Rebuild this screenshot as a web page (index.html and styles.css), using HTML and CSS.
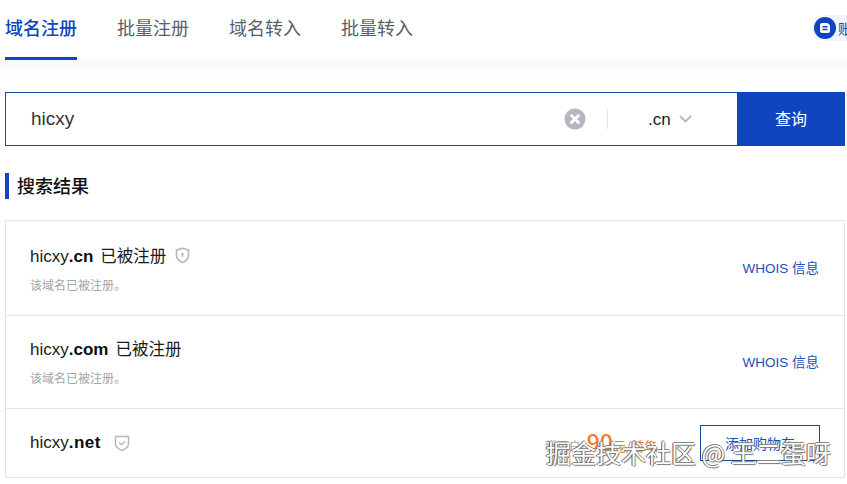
FILE: index.html
```html
<!DOCTYPE html>
<html lang="zh-CN">
<head>
<meta charset="utf-8">
<title>域名注册</title>
<link rel="stylesheet" href="styles.css">
</head>
<body>
<div class="page">
  <header class="topbar">
    <nav class="tabs">
      <a class="tab active">域名注册</a>
      <a class="tab">批量注册</a>
      <a class="tab">域名转入</a>
      <a class="tab">批量转入</a>
    </nav>
    <div class="promo">
      <svg class="promo-icon" width="22" height="22" viewBox="0 0 22 22"><circle cx="11" cy="11" r="11" fill="#0f46c0"/><path d="M6 8a2 2 0 0 1 2-2h5.500L16 8.200V14a2 2 0 0 1-2 2H8a2 2 0 0 1-2-2z" fill="#fff"/><path d="M8.500 9.800h5M8.500 12.500h5" stroke="#0f46c0" stroke-width="1.400"/></svg>
      <span class="promo-text">账户</span>
    </div>
  </header>
  <div class="fade"></div>

  <main class="content">
    <form class="search">
      <div class="search-input">hicxy</div>
      <svg class="clear" width="22" height="22" viewBox="0 0 22 22"><circle cx="11" cy="11" r="10.500" fill="#b4b7bf"/><path d="M7.500 7.500l7 7M14.500 7.500l-7 7" stroke="#fff" stroke-width="3" stroke-linecap="round"/></svg>
      <span class="sep"></span>
      <div class="suffix">
        <span class="suffix-text">.cn</span>
        <svg width="13" height="8" viewBox="0 0 13 8"><path d="M1 1l5.500 5.500L12 1" fill="none" stroke="#b4b7bf" stroke-width="1.800"/></svg>
      </div>
      <button class="go" type="button">查询</button>
    </form>

    <h2 class="section-title">搜索结果</h2>

    <section class="results">
      <div class="row row-a">
        <div class="info">
          <div class="domain">hicxy<b>.cn</b><span class="state">已被注册</span>
            <svg class="shield" width="15" height="17" viewBox="0 0 15 17"><path d="M7.500 1.200l6 2v5c0 3.500-2.600 5.900-6 7.300-3.400-1.400-6-3.800-6-7.300v-5z" fill="none" stroke="#b5b8bd" stroke-width="1.700"/><circle cx="7.500" cy="7" r="1.300" fill="#b5b8bd"/><path d="M7.500 7.500v2.500" stroke="#b5b8bd" stroke-width="1.200"/></svg>
          </div>
          <p class="note">该域名已被注册。</p>
        </div>
        <a class="whois">WHOIS 信息</a>
      </div>
      <div class="row row-b">
        <div class="info">
          <div class="domain">hicxy<b>.com</b><span class="state">已被注册</span></div>
          <p class="note">该域名已被注册。</p>
        </div>
        <a class="whois">WHOIS 信息</a>
      </div>
      <div class="row row-c">
        <div class="info">
          <div class="domain">hicxy<b class="tld-net">.net</b>
            <svg class="shield shield-ok" width="16" height="17" viewBox="0 0 16 17"><path d="M1.500 1.500h13v7.500c0 2.800-3 5-6.500 6.500-3.500-1.500-6.500-3.700-6.500-6.500z" fill="none" stroke="#b5b8bd" stroke-width="1.500"/><path d="M5 7.500l2.500 2.200L11 6.500" fill="none" stroke="#b5b8bd" stroke-width="1.500"/></svg>
          </div>
        </div>
        <div class="buy">
          <div class="price"><span class="price-old">新用户</span><strong>90</strong><span class="price-unit">元/首年</span></div>
          <a class="cart">添加购物车</a>
        </div>
      </div>
    </section>
  </main>
  <div class="watermark">掘金技术社区 @ 王二蛋呀</div>
</div>
</body>
</html>
```
FILE: styles.css
```css
* { box-sizing: border-box; }
html, body { margin: 0; padding: 0; background: #fff; }
body {
  width: 847px;
  height: 484px;
  overflow: hidden;
  font-family: "Liberation Sans", "Noto Sans CJK SC", sans-serif;
  color: #1a1a1a;
}
.page { position: relative; width: 847px; height: 484px; overflow: hidden; }

.topbar {
  display: flex;
  justify-content: space-between;
  height: 60px;
  padding-left: 5px;
}
.tabs { display: flex; gap: 40px; }
.tab {
  width: 72px;
  height: 60px;
  font-family: "Noto Sans CJK SC", sans-serif;
  font-size: 18px;
  line-height: 54px;
  color: #5a6068;
  white-space: nowrap;
}
.tab.active { color: #0f46c0; border-bottom: 3px solid #0f46c0; font-weight: 500; }
.promo {
  display: flex;
  align-items: center;
  gap: 2px;
  width: 35px;
  height: 26px;
  margin-top: 15px;
  padding-left: 2px;
  background: #f0f4fc;
  border-radius: 13px 0 0 13px;
  overflow: hidden;
  flex: none;
}
.promo-icon { flex: none; }
.promo-text {
  flex: none;
  font-family: "Noto Sans CJK SC", sans-serif;
  font-size: 14px;
  color: #0f46c0;
}
.fade { height: 16px; background: linear-gradient(#f7f8fa, #fff); }

.content { padding: 16px 2px 0 5px; }

.search {
  display: flex;
  align-items: center;
  height: 54px;
  border: 1px solid #174a9c;
  border-right: 0;
}
.search-input {
  flex: 1;
  padding-left: 25px;
  font-size: 19px;
  color: #33363a;
}
.clear { flex: none; margin-right: 21px; }
.sep { width: 1px; height: 20px; background: #e3e4e6; flex: none; }
.suffix {
  display: flex;
  align-items: center;
  gap: 8px;
  width: 129px;
  padding-left: 40px;
  font-size: 17px;
  color: #1a1a1a;
}
.suffix-text { padding-top: 1px; }
.go {
  width: 108px;
  height: 54px;
  margin: -1px 0;
  border: 0;
  padding: 0 0 2px;
  background: #0f46c0;
  color: #fff;
  font-family: "Noto Sans CJK SC", sans-serif;
  font-size: 16px;
  font-weight: 400;
}

.section-title {
  height: 26px;
  margin: 27px 0 21px;
  padding-left: 8px;
  border-left: 4px solid #0f46c0;
  font-family: "Noto Sans CJK SC", sans-serif;
  font-size: 18px;
  font-weight: 500;
  line-height: 24px;
  color: #111;
}

.results { border: 1px solid #e2e3e5; }
.row {
  display: flex;
  justify-content: space-between;
  padding: 0 25px 0 24px;
  border-top: 1px solid #e2e3e5;
}
.row-a { height: 94px; border-top: 0; align-items: flex-start; padding-top: 22px; }
.row-b { height: 93px; align-items: flex-start; padding-top: 20px; }
.row-c { height: 69px; align-items: center; padding-right: 24px; }
.domain {
  display: flex;
  align-items: baseline;
  height: 24px;
  font-size: 17px;
  line-height: 24px;
  color: #1a1a1a;
  white-space: nowrap;
}
.domain b { font-weight: 700; color: #0c0c0c; }
.domain .tld-net { letter-spacing: 0.5px; }
.state {
  margin-left: 7px;
  font-family: "Noto Sans CJK SC", sans-serif;
  font-size: 16.500px;
}
.shield { margin-left: 9px; align-self: center; }
.shield-ok { margin-left: 13px; }
.note {
  margin: 9px 0 0;
  font-family: "Noto Sans CJK SC", sans-serif;
  font-size: 12px;
  line-height: 18px;
  color: #a3a5a9;
}
.whois {
  margin-top: 16px;
  font-size: 13.500px;
  line-height: 20px;
  font-family: "Liberation Sans", "Noto Sans CJK SC", sans-serif;
  color: #1a50b8;
  white-space: nowrap;
}
.row-b .whois { margin-top: 17px; }
.buy { display: flex; align-items: center; gap: 45px; }
.price { display: flex; align-items: baseline; margin-top: -4px; font-family: "Noto Sans CJK SC", sans-serif; }
.price-old { font-size: 12px; color: #a3a5a9; margin-right: 6px; }
.price strong { font-size: 23px; font-weight: 500; color: #f07a2a; line-height: 28px; }
.price-unit { font-size: 13px; color: #f07a2a; margin-left: 0; margin-right: -2px; }
.cart {
  width: 120px;
  height: 36px;
  border: 1px solid #174a9c;
  font-family: "Noto Sans CJK SC", sans-serif;
  font-size: 14px;
  line-height: 34px;
  text-align: center;
  color: #1a50b8;
}

.watermark {
  position: absolute;
  left: 546px;
  top: 435px;
  font-family: "Noto Sans CJK SC", sans-serif;
  font-size: 25px;
  line-height: 34px;
  color: #fff;
  white-space: nowrap;
  text-shadow: -1px 0 0 #555, 1px 1px 1px #777, 0 -1px 0 #888;
}
```
